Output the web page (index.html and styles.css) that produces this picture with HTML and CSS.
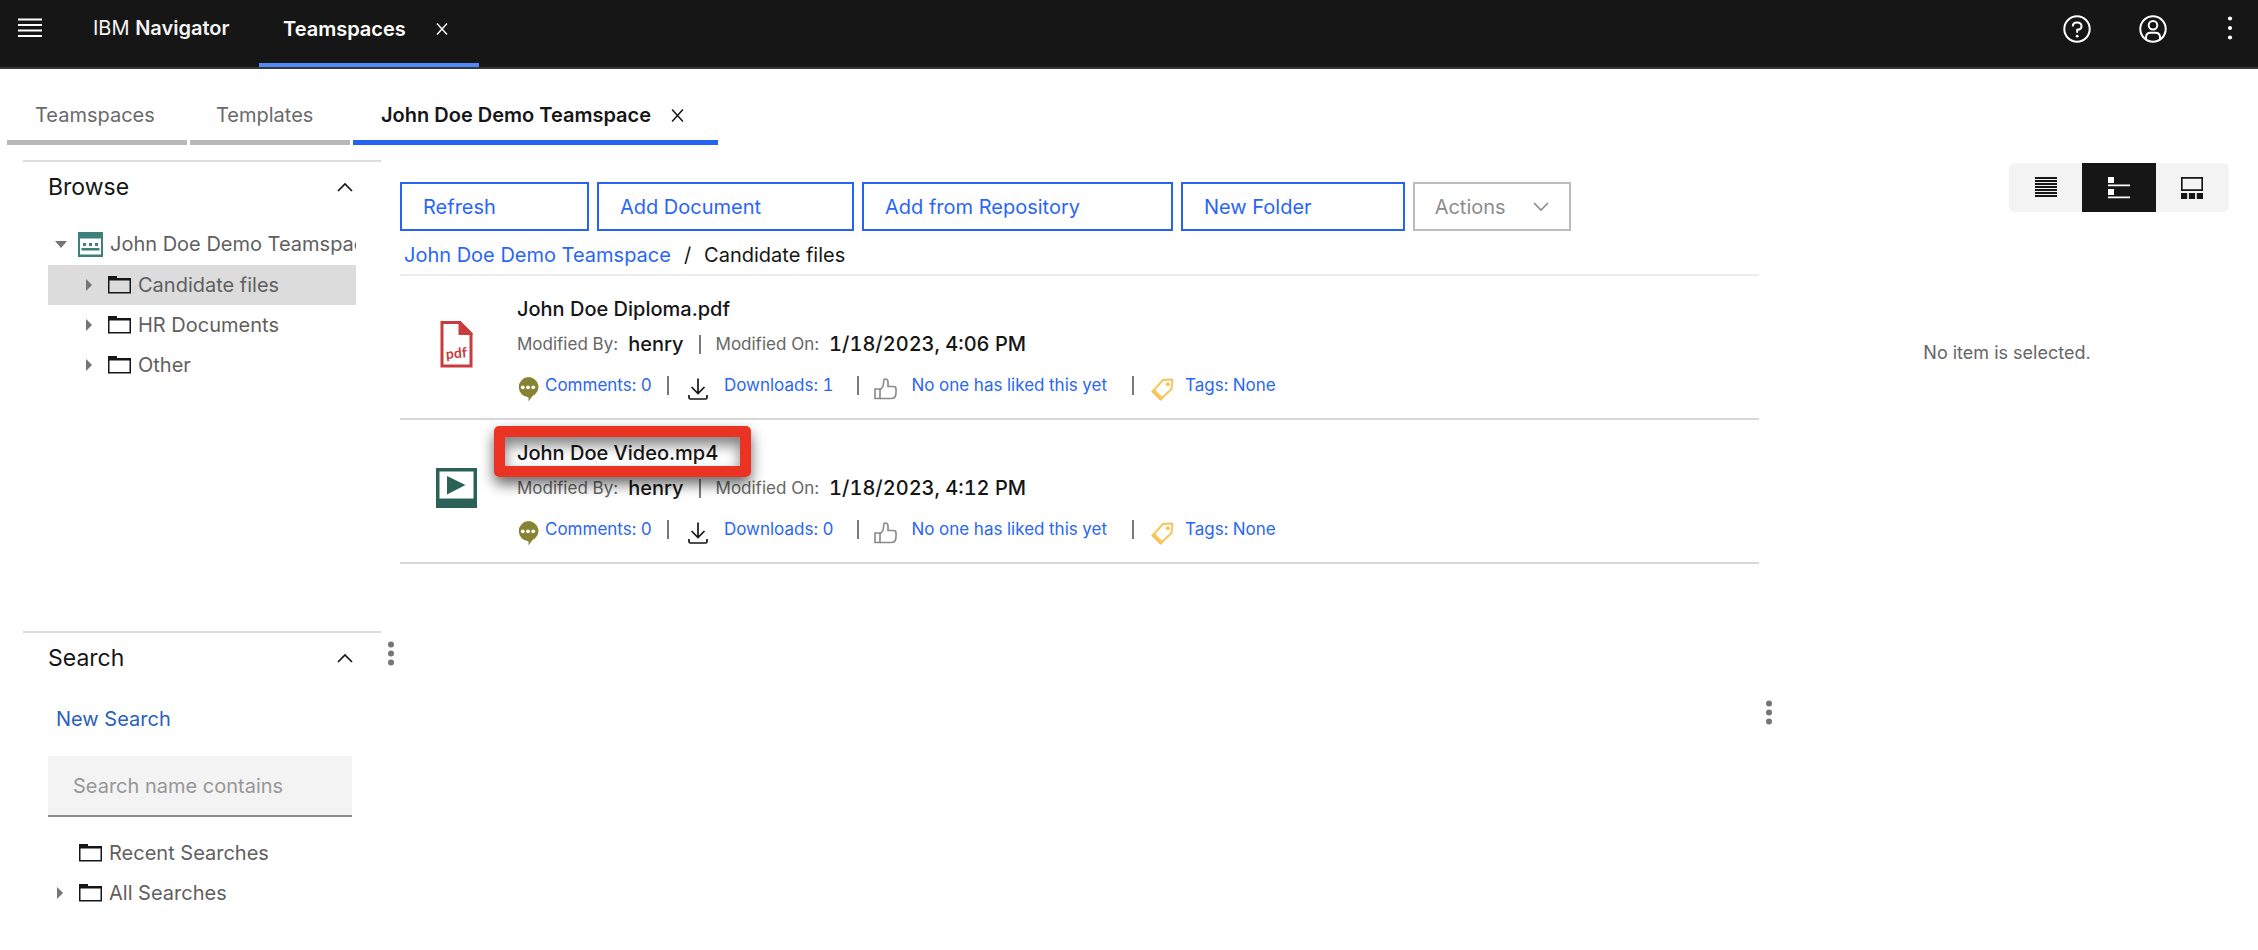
FILE: index.html
```
<!DOCTYPE html>
<html lang="en">
<head>
<meta charset="utf-8">
<meta name="viewport" content="width=device-width, initial-scale=1">
<title>IBM Navigator - Teamspaces</title>
<link rel="stylesheet" href="styles.css">
</head>
<body>
<svg class="defs" aria-hidden="true">
  <symbol id="close" viewBox="0 0 12 12"><path d="M1 0.5L11 11.5M11 0.5L1 11.5" fill="none" stroke="currentColor" stroke-width="1.4"/></symbol>
  <symbol id="chevron" viewBox="0 0 16 10"><path d="M1 9L8 2L15 9" fill="none" stroke="currentColor" stroke-width="1.7"/></symbol>
  <symbol id="folder" viewBox="0 0 23 18"><path d="M0 0H9V2H23V17.5H0Z" fill="#161616"/><path d="M1.5 4.5H21.5V16H1.5Z" fill="#fff"/></symbol>
  <symbol id="folder-selected" viewBox="0 0 23 18"><path d="M0 0H9V2H23V17.5H0Z" fill="#161616"/><path d="M1.5 4.5H21.5V16H1.5Z" fill="#dcdcdc"/></symbol>
  <symbol id="twist" viewBox="0 0 6 12"><path d="M0 0L6 6L0 12Z" fill="currentColor"/></symbol>
  <symbol id="dots" viewBox="0 0 6 25"><circle cx="3" cy="3.5" r="3"/><circle cx="3" cy="12.5" r="3"/><circle cx="3" cy="21.5" r="3"/></symbol>
  <symbol id="comment" viewBox="0 0 22 25"><path d="M11 0A10.5 10 0 0 1 15.5 19L11.5 24.5V20.3A10.5 10.2 0 0 1 11 0Z" fill="#868332"/><g fill="#fff"><circle cx="5.8" cy="10.3" r="1.9"/><circle cx="11" cy="10.3" r="1.9"/><circle cx="16.2" cy="10.3" r="1.9"/></g></symbol>
  <symbol id="download" viewBox="0 0 20 22"><path d="M10 0.5V15.5M3.500 9L10 15.5L16.500 9" fill="none" stroke="#161616" stroke-width="1.7"/><path d="M1 17V19.500Q1 21 2.500 21H17.500Q19 21 19 19.500V17" fill="none" stroke="#161616" stroke-width="1.7"/></symbol>
  <symbol id="thumb" viewBox="0 0 23 22"><g fill="none" stroke="#8a8a8a" stroke-width="1.6"><path d="M1 11H6V20.5H1Z"/><path d="M6 12L9 8.5L10 1.8Q10.2 1 11 1Q14 1 14 4V8.5H19.5Q22 8.5 22 11V15Q22 20.5 17 20.5H6"/></g></symbol>
  <symbol id="tag" viewBox="0 0 23 23"><path d="M12 2L20.5 1.5Q21.5 1.5 21.3 3L20.5 11L9.5 21.5L1.5 13.5Z" fill="none" stroke="#f7c657" stroke-width="2"/><path d="M0.8 13L9.5 22L12 19.700L3.300 11Z" fill="#f7c657"/><circle cx="16.800" cy="6.200" r="1.900" fill="#f7c657"/></symbol>
</svg>

<header class="banner">
  <button class="icon-button menu" aria-label="Menu"><svg width="24" height="20" viewBox="0 0 24 20"><path d="M0 1.5H24M0 7H24M0 12.5H24M0 18H24" stroke="#fff" stroke-width="1.8"/></svg></button>
  <div class="brand">IBM <b>Navigator</b></div>
  <div class="desk-tab">
    <span>Teamspaces</span>
    <button class="icon-button" aria-label="Close Teamspaces"><svg width="12" height="12"><use href="#close"/></svg></button>
  </div>
  <nav class="banner-tools" aria-label="Tools">
    <button class="icon-button" aria-label="Help"><svg width="28" height="28" viewBox="0 0 28 28" fill="none" stroke="#fff" stroke-width="2"><circle cx="14" cy="14" r="12.7"/><path d="M9.8 11.5Q9.8 7.5 14 7.5Q18.5 7.5 18.5 11.2Q18.5 14.5 14.2 14.8V17.8"/><circle cx="14.2" cy="21.2" r="1.4" fill="#fff" stroke="none"/></svg></button>
    <button class="icon-button" aria-label="Account"><svg width="28" height="28" viewBox="0 0 28 28" fill="none" stroke="#fff" stroke-width="2"><circle cx="14" cy="14" r="12.7"/><circle cx="14" cy="10.2" r="4.3"/><path d="M7 24.3V22.5Q7 17.8 11.5 17.8H16.5Q21 17.8 21 22.5V24.3"/></svg></button>
    <button class="icon-button" aria-label="More"><svg width="6" height="26" viewBox="0 0 6 26" fill="#fff"><circle cx="3" cy="3.5" r="2.1"/><circle cx="3" cy="13" r="2.1"/><circle cx="3" cy="22.5" r="2.1"/></svg></button>
  </nav>
</header>

<nav class="tabs" aria-label="Teamspace tabs">
  <button class="tab">Teamspaces</button>
  <button class="tab templates">Templates</button>
  <div class="tab active"><span>John Doe Demo Teamspace</span><button class="icon-button" aria-label="Close tab"><svg width="13" height="13"><use href="#close"/></svg></button></div>
</nav>

<div class="workspace">
  <div class="sidebar">
    <section class="pane browse">
      <h2 class="pane-head">Browse <svg width="16" height="10"><use href="#chevron"/></svg></h2>
      <ul class="tree">
        <li class="node root">
          <svg class="twist" width="12" height="7" viewBox="0 0 12 7"><path d="M0 0H12L6 7Z" fill="currentColor"/></svg>
          <svg width="25" height="25" viewBox="0 0 25 25"><path d="M0 0H25V25H0Z" fill="#3c807b"/><path d="M2 6.5H23V22.5H2Z" fill="#fff"/><path d="M3.5 16H21.5V18.5H3.5ZM5 11H8V14H5ZM11 11H14V14H11ZM17 11H20V14H17Z" fill="#3c807b"/></svg>
          <span>John Doe Demo Teamspace</span>
        </li>
        <li class="node child selected"><svg class="twist" width="6" height="12"><use href="#twist"/></svg><svg width="23" height="18"><use href="#folder-selected"/></svg><span>Candidate files</span></li>
        <li class="node child"><svg class="twist" width="6" height="12"><use href="#twist"/></svg><svg width="23" height="18"><use href="#folder"/></svg><span>HR Documents</span></li>
        <li class="node child"><svg class="twist" width="6" height="12"><use href="#twist"/></svg><svg width="23" height="18"><use href="#folder"/></svg><span>Other</span></li>
      </ul>
    </section>
    <section class="pane search">
      <h2 class="pane-head">Search <svg width="16" height="10"><use href="#chevron"/></svg></h2>
      <a class="new-search" href="#">New Search</a>
      <input class="search-box" type="text" placeholder="Search name contains" aria-label="Search name contains">
      <ul class="tree searches">
        <li class="node"><span class="twist"></span><svg width="23" height="18"><use href="#folder"/></svg><span>Recent Searches</span></li>
        <li class="node"><svg class="twist" width="6" height="12"><use href="#twist"/></svg><svg width="23" height="18"><use href="#folder"/></svg><span>All Searches</span></li>
      </ul>
    </section>
  </div>

  <div class="splitter left"><svg width="6" height="25"><use href="#dots"/></svg></div>

  <main class="content">
    <div class="toolbar">
      <button class="action">Refresh</button>
      <button class="action">Add Document</button>
      <button class="action">Add from Repository</button>
      <button class="action">New Folder</button>
      <button class="action more" disabled>Actions <svg width="16" height="10"><use href="#chevron"/></svg></button>
    </div>
    <nav class="crumbs" aria-label="Breadcrumb"><a href="#">John Doe Demo Teamspace</a><span>/</span><span>Candidate files</span></nav>
    <ul class="files">
      <li class="file">
        <svg class="file-icon" width="32" height="48" viewBox="0 0 32 48"><path d="M1.5 2.500H19L30.500 14V46H1.500Z" fill="#fff" stroke="#cb3a3c" stroke-width="3"/><path d="M18 1H20L32 13V15H18Z" fill="#cb3a3c"/><text x="16" y="38" text-anchor="middle" class="pdf-label" transform="rotate(-5 16 35)">pdf</text></svg>
        <div class="file-body">
          <h3><span class="name">John Doe Diploma.pdf</span></h3>
          <p class="meta"><span>Modified By:</span><b>henry</b><i class="bar"></i><span>Modified On:</span><b>1/18/2023, 4:06 PM</b></p>
          <div class="social">
            <a class="comments" href="#"><svg width="22" height="25"><use href="#comment"/></svg>Comments: 0</a><i class="bar"></i>
            <a class="downloads" href="#"><svg width="20" height="22"><use href="#download"/></svg>Downloads: 1</a><i class="bar"></i>
            <a class="likes" href="#"><svg width="23" height="22"><use href="#thumb"/></svg>No one has liked this yet</a><i class="bar"></i>
            <a class="tags" href="#"><svg width="23" height="23"><use href="#tag"/></svg>Tags: None</a>
          </div>
        </div>
      </li>
      <li class="file">
        <svg class="file-icon" width="41" height="40" viewBox="0 0 41 40"><path d="M0 0H41V40H0Z" fill="#2c6158"/><path d="M3.5 3.5H37.5V30.5H3.5Z" fill="#fff"/><path d="M11 8L29.5 17L11 26.5Z" fill="#2c6158"/></svg>
        <div class="file-body">
          <h3><span class="name marked">John Doe Video.mp4</span></h3>
          <p class="meta"><span>Modified By:</span><b>henry</b><i class="bar"></i><span>Modified On:</span><b>1/18/2023, 4:12 PM</b></p>
          <div class="social">
            <a class="comments" href="#"><svg width="22" height="25"><use href="#comment"/></svg>Comments: 0</a><i class="bar"></i>
            <a class="downloads" href="#"><svg width="20" height="22"><use href="#download"/></svg>Downloads: 0</a><i class="bar"></i>
            <a class="likes" href="#"><svg width="23" height="22"><use href="#thumb"/></svg>No one has liked this yet</a><i class="bar"></i>
            <a class="tags" href="#"><svg width="23" height="23"><use href="#tag"/></svg>Tags: None</a>
          </div>
        </div>
      </li>
    </ul>
  </main>

  <div class="splitter right"><svg width="6" height="25"><use href="#dots"/></svg></div>

  <aside class="details">
    <div class="views">
      <button class="view" aria-label="Details view"><svg width="22" height="21" viewBox="0 0 22 21"><path d="M0 1H22M0 4H22M0 7H22M0 10H22M0 13H22M0 16H22M0 19H22" stroke="#161616" stroke-width="2"/></svg></button>
      <button class="view on" aria-label="List view"><svg width="22" height="22" viewBox="0 0 22 22"><path d="M0 0H6V6H0ZM0 12H6V18H0ZM0 7.5H22V9.2H0ZM0 19.5H22V21.2H0Z" fill="#fff"/></svg></button>
      <button class="view" aria-label="Filmstrip view"><svg width="22" height="22" viewBox="0 0 22 22"><path d="M0.8 0.9H21.2V13.1H0.8Z" fill="none" stroke="#161616" stroke-width="1.7"/><path d="M0 16H6.2V22H0ZM7.9 16H14.1V22H7.9ZM15.8 16H22V22H15.8Z" fill="#161616"/></svg></button>
    </div>
    <p class="empty">No item is selected.</p>
  </aside>
</div>
</body>
</html>
```
FILE: styles.css
```
* { box-sizing: border-box; }

body {
  margin: 0;
  min-height: 100vh;
  display: flex;
  flex-direction: column;
  background: #fff;
  color: #161616;
  font: 400 20px/24px Inter, "Open Sans", sans-serif;
}

.defs { position: absolute; width: 0; height: 0; }
svg { display: block; flex: none; }
ul { list-style: none; margin: 0; padding: 0; }
h2, h3, p { margin: 0; font-weight: 400; }
h3 { font-size: 20px; }
button { font: inherit; color: inherit; background: none; border: 0; padding: 0; text-align: left; cursor: pointer; }
a { color: #2a66f5; text-decoration: none; }

/* Header */
.banner {
  display: flex;
  height: 69px;
  background: #161616;
  border-bottom: 2px solid #393939;
  color: #fff;
  padding: 0 25px 0 18px;
}
.menu { align-self: flex-start; padding-top: 18px; }
.brand { padding: 16px 0 0 51px; width: 217px; white-space: nowrap; color: #f4f4f4; }
.brand b, .desk-tab { font-weight: 600; }
.desk-tab {
  display: flex;
  justify-content: space-between;
  align-items: center;
  width: 220px;
  padding: 0 31px 5px 24px;
  border-bottom: 4px solid #4f89fa;
}
.banner-tools { display: flex; gap: 48px; margin-left: auto; padding-top: 15px; align-items: flex-start; }
.banner-tools .icon-button:last-child { margin-left: 12px; }

/* Tabs */
.tabs { display: flex; gap: 3px; padding: 0 7px; }
.tab {
  display: flex;
  align-items: center;
  gap: 20px;
  height: 76px;
  width: 180px;
  padding: 21px 28px 0;
  border-bottom: 5px solid #b8b8b8;
  color: #6a6a6a;
}
.tab.templates { width: 160px; padding-left: 26px; }
.tab.active { width: 365px; color: #161616; font-weight: 600; border-color: #2563f5; white-space: nowrap; }

/* Workspace */
.workspace { display: flex; flex: 1; }
.sidebar { width: 381px; padding: 15px 0 0 23px; flex: none; }
.pane { border-top: 2px solid #dcdcdc; padding-left: 25px; }
.browse { min-height: 471px; }
.pane-head {
  display: flex;
  justify-content: space-between;
  align-items: center;
  height: 50px;
  padding-right: 28px;
  font-size: 23px;
}
.tree { padding-right: 25px; margin-top: 11px; color: #5f5f5f; }
.node { display: flex; align-items: center; height: 40px; white-space: nowrap; overflow: hidden; gap: 7px; }
.twist { margin-right: 9px; color: #757575; flex: none; }
.node.root { padding-left: 7px; height: 42px; }
.node.root .twist { margin-right: 4px; }
.child { padding-left: 38px; }
.selected { background: #dcdcdc; }

.new-search { display: block; margin: 24px 0 25px 8px; color: #2a5fbd; }
.search-box {
  display: block;
  width: 304px;
  height: 61px;
  padding: 0 25px;
  border: 0;
  border-bottom: 2px solid #8d8d8d;
  border-radius: 0;
  background: #f3f3f3;
  color: #161616;
  font: inherit;
}
.search-box::placeholder { color: #979797; opacity: 1; }
.searches { margin-top: 16px; }
.searches .node { padding-left: 9px; }
.searches .twist { width: 6px; }

.splitter { width: 19px; flex: none; display: flex; justify-content: center; fill: #757575; }
.splitter.left { padding-top: 496px; }
.splitter.right { padding-top: 555px; }

/* File list */
.content { flex: 1; min-width: 0; padding-top: 37px; }
.toolbar { display: flex; gap: 8px; }
.action {
  height: 49px;
  padding: 0 91px 0 21px;
  border: 2px solid #2563f5;
  color: #2a66f5;
  white-space: nowrap;
}
.action.more {
  display: flex;
  align-items: center;
  gap: 27px;
  padding: 0 20px;
  border-color: #bcbcbc;
  color: #8d8d8d;
}
.action.more svg { transform: rotate(180deg); }
.crumbs { display: flex; gap: 13px; padding: 12px 4px 7px; border-bottom: 2px solid #ececec; }

.file { display: flex; height: 144px; border-bottom: 2px solid #d8d8d8; }
.file-icon { width: 77px; align-self: center; margin: 0 0 6px 18px; }
.file-body { padding: 21px 0 0 22px; }
.name { font-weight: 500; position: relative; }
.meta { display: flex; align-items: center; height: 24px; margin-top: 11px; font-size: 17px; color: #666; }
.meta b { font-size: 20px; font-weight: 500; color: #161616; margin-left: 10px; font-variant-numeric: tabular-nums; }
.bar { width: 2px; height: 19px; background: #7a7a7a; margin: 0 15px; }
.social {
  display: flex;
  align-items: center;
  height: 28px;
  margin-top: 15px;
  font-size: 17px;
  font-variant-numeric: tabular-nums;
  white-space: nowrap;
}
.social a { display: flex; align-items: center; }
.social svg { margin-top: 8px; }
.comments { gap: 6px; }
.downloads { gap: 16px; padding: 0 8px 0 4px; }
.likes { gap: 15px; padding-right: 10px; }
.tags { gap: 11px; padding-left: 2px; }
.pdf-label { font: 700 14px Lato, sans-serif; fill: #cb3a3c; }

/* Highlight frame drawn over the title */
.marked::after {
  content: "";
  position: absolute;
  inset: -15px -33px -12px -23px;
  border: 11px solid #ea3323;
  border-radius: 5px;
  box-shadow: 0 7px 14px rgba(0, 0, 0, 0.6), inset 0 8px 14px rgba(0, 0, 0, 0.5);
}

/* Details pane */
.details { width: 480px; flex: none; padding: 18px 29px 0 7px; }
.views { display: flex; width: 220px; margin-left: auto; border-radius: 6px; overflow: hidden; background: #f3f3f3; }
.view { display: flex; flex: 1; height: 49px; align-items: center; justify-content: center; }
.view.on { background: #161616; }
.empty { margin-top: 129px; text-align: center; font-size: 18px; color: #666; }
```
